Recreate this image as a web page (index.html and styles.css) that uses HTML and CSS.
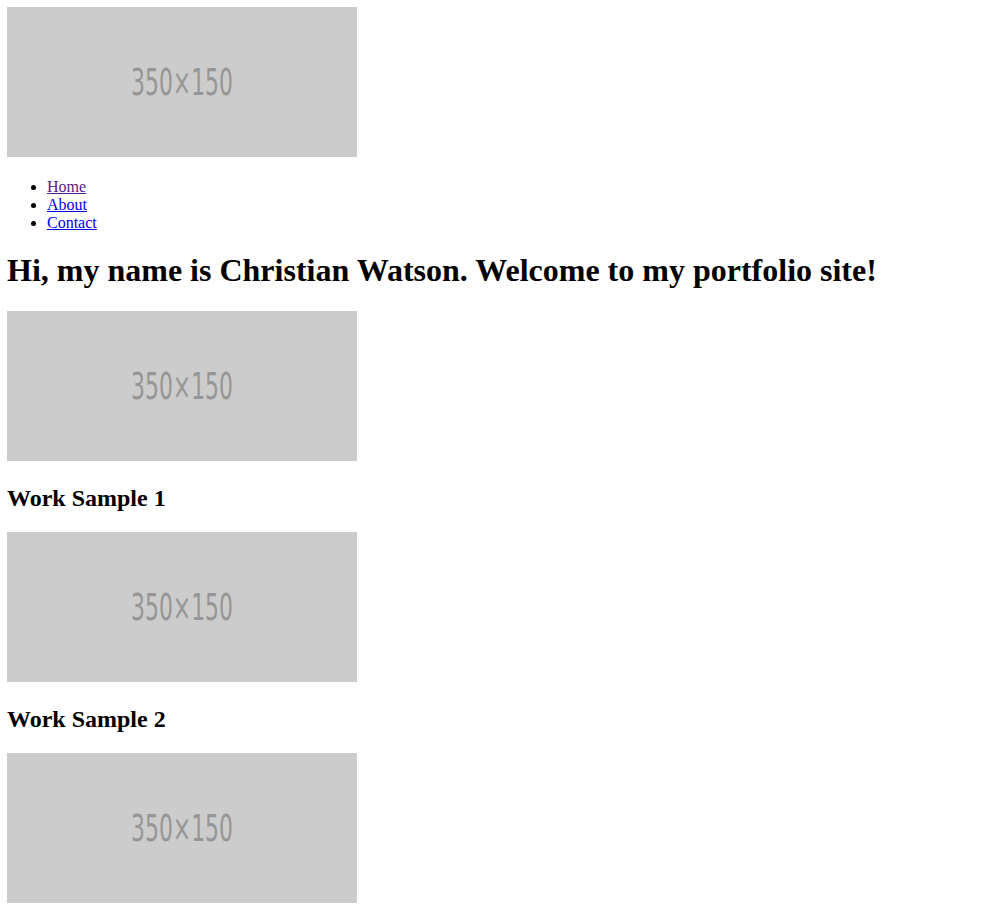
FILE: index.html
```html
<!DOCTYPE html>
<html>
<head>
<meta charset="utf-8">
<title>Christian Watson Portfolio</title>
<link rel="stylesheet" href="styles.css">
</head>
<body>
<header>
  <div class="logo">
    <svg class="ph" width="350" height="150" viewBox="0 0 350 150"><rect width="350" height="150" fill="#cccccc"/><text x="175" y="88" text-anchor="middle" textLength="102" lengthAdjust="spacingAndGlyphs" font-family="DejaVu Sans Condensed, DejaVu Sans, sans-serif" font-size="37" fill="#969696">350×150</text></svg>
  </div>
  <nav>
    <ul>
      <li><a class="visited" href="#">Home</a></li>
      <li><a href="#">About</a></li>
      <li><a href="#">Contact</a></li>
    </ul>
  </nav>
</header>
<h1>Hi, my name is Christian Watson. Welcome to my portfolio site!</h1>
<div class="sample">
  <svg class="ph" width="350" height="150" viewBox="0 0 350 150"><rect width="350" height="150" fill="#cccccc"/><text x="175" y="88" text-anchor="middle" textLength="102" lengthAdjust="spacingAndGlyphs" font-family="DejaVu Sans Condensed, DejaVu Sans, sans-serif" font-size="37" fill="#969696">350×150</text></svg>
</div>
<h2>Work Sample 1</h2>
<div class="sample">
  <svg class="ph" width="350" height="150" viewBox="0 0 350 150"><rect width="350" height="150" fill="#cccccc"/><text x="175" y="88" text-anchor="middle" textLength="102" lengthAdjust="spacingAndGlyphs" font-family="DejaVu Sans Condensed, DejaVu Sans, sans-serif" font-size="37" fill="#969696">350×150</text></svg>
</div>
<h2>Work Sample 2</h2>
<div class="sample">
  <svg class="ph" width="350" height="150" viewBox="0 0 350 150"><rect width="350" height="150" fill="#cccccc"/><text x="175" y="88" text-anchor="middle" textLength="102" lengthAdjust="spacingAndGlyphs" font-family="DejaVu Sans Condensed, DejaVu Sans, sans-serif" font-size="37" fill="#969696">350×150</text></svg>
</div>
</body>
</html>
```
FILE: styles.css
```css
body {
  margin: 7px;
  font-family: "Liberation Serif", "Times New Roman", serif;
  font-size: 16px;
  color: #000;
  background: #fff;
}
.ph {
  display: inline;
  vertical-align: baseline;
}
ul {
  margin: 17px 0 16px;
  padding-left: 40px;
}
a {
  color: #0000ee;
}
a.visited {
  color: #551a8b;
}
h1 {
  font-size: 32px;
  margin: 20.44px 0 21.44px;
}
h2 {
  font-size: 24px;
  margin: 19.92px 0;
}
```
